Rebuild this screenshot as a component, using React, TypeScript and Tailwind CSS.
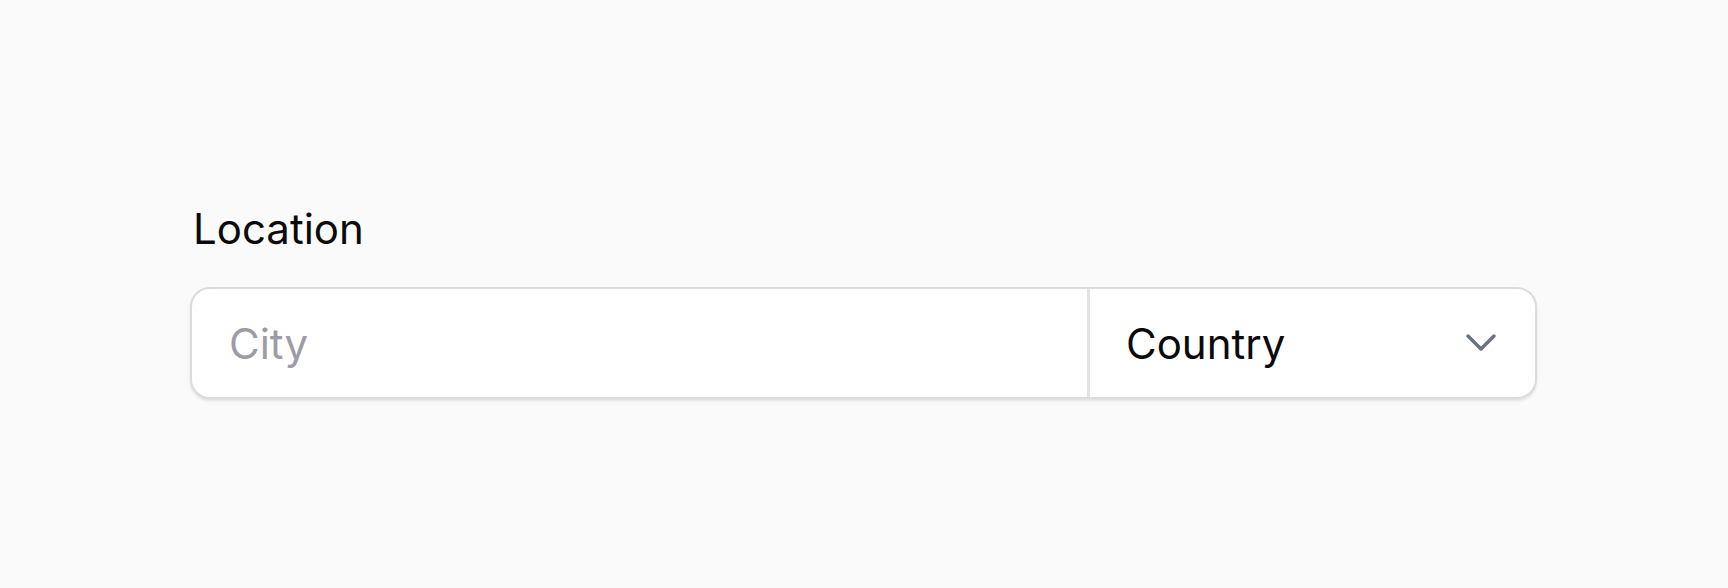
import React from "react";

export default function App() {
  return (
    <div className="w-[1728px] h-[588px] bg-[#fafafa] overflow-hidden" style={{ fontFamily: "Inter, 'Noto Sans', sans-serif" }}>
      <div className="pl-[190px] pt-[204px] flex flex-col gap-[33px]">
        <label className="text-[42px] leading-[50px] text-[#0a0a0a] pl-[3px]">Location</label>
        <div className="flex w-[1347px] h-[112px] bg-white border-2 border-[#dcdcde] rounded-[20px] shadow-[0_2px_3px_rgba(0,0,0,0.1)] overflow-hidden">
          <div className="flex-1 flex items-center pl-[37px]">
            <span className="text-[42px] text-[#9d9ca6]">City</span>
          </div>
          <div className="w-[3px] bg-[#e3e3e5]" />
          <div className="w-[445px] flex items-center justify-between pl-[36px] pr-[38px]">
            <span className="text-[42px] text-[#0a0a0a]">Country</span>
            <svg width="32" height="20" viewBox="0 0 32 20" fill="none">
              <path d="M3 3 L16 16 L29 3" stroke="#6b7280" strokeWidth="3.5" strokeLinecap="round" strokeLinejoin="round" />
            </svg>
          </div>
        </div>
      </div>
    </div>
  );
}
